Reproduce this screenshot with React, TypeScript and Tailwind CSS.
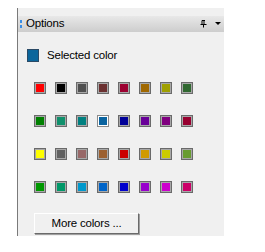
import React from 'react';

const rows: string[][] = [
  ['#ff0000', '#000000', '#505050', '#6b3030', '#9c0030', '#a06800', '#a0a000', '#306830'],
  ['#008000', '#10906c', '#008080', '#0a64a0', '#000098', '#680098', '#800080', '#980030'],
  ['#ffff00', '#606060', '#986868', '#9c6030', '#cc0000', '#d09a00', '#cccc00', '#689c30'],
  ['#009800', '#009868', '#0098cc', '#0064c8', '#0000cc', '#9800cc', '#cc00cc', '#cc0068'],
];

const Swatch = ({ color, selected }: { color: string; selected?: boolean }) => (
  <div
    className={
      selected
        ? 'w-[12px] h-[12px] border border-[#8a8a8a] bg-white p-px'
        : 'w-[12px] h-[12px] border border-[#6a6a6a] bg-[#a8a8a8] p-px'
    }
  >
    <div className="w-full h-full" style={{ backgroundColor: color }} />
  </div>
);

export default function App() {
  return (
    <div className="w-[265px] h-[252px] bg-white" style={{ fontFamily: '"Liberation Sans", Arial, sans-serif' }}>
      <div className="ml-[17px] pt-[8px]">
        <div className="w-[207px] h-[228px] bg-[#f0f0f0] border-l border-[#7a7a7a] flex flex-col">
          <div className="h-[8px]" />
          {/* header */}
          <div className="h-[16px] bg-gradient-to-b from-[#e8e8e8] to-[#cdcdcd] flex items-center pl-[2px] pr-[3px]">
            <div className="flex flex-col gap-[2px] mr-[4px]">
              <div className="w-[2px] h-[3px] bg-[#3a8ee6]" />
              <div className="w-[2px] h-[3px] bg-[#3a8ee6]" />
            </div>
            <span className="text-[11.5px] leading-none text-black tracking-[-0.2px]">Options</span>
            <div className="ml-auto flex items-center gap-[8px]">
              <svg width="7" height="8" viewBox="0 0 7 8">
                <path d="M2 0.5h3M2 0.5v4M4 0.5v4M0.5 4.5h6M3.5 4.5v3" stroke="#000" strokeWidth="1" fill="none" />
              </svg>
              <svg width="6" height="4" viewBox="0 0 6 4">
                <path d="M0 0h6L3 3z" fill="#000" />
              </svg>
            </div>
          </div>
          {/* selected color */}
          <div className="flex items-center mt-[17px] pl-[9px]">
            <div className="w-[12px] h-[13px] bg-[#0b669c] border border-[#2a4a66]" />
            <span className="ml-[8px] text-[11.5px] leading-none text-black tracking-[-0.2px]">Selected color</span>
          </div>
          {/* grid */}
          <div className="mt-[20px] pl-[16px] flex flex-col gap-[21px]">
            {rows.map((row, r) => (
              <div key={r} className="flex gap-[9px]">
                {row.map((c, i) => (
                  <Swatch key={i} color={c} selected={r === 1 && i === 3} />
                ))}
              </div>
            ))}
          </div>
          <div className="mt-[17px] pl-[16px]">
            <button className="w-[105px] h-[21px] bg-[#f0f0f0] border border-t-white border-l-white border-r-[#6a6a6a] border-b-[#6a6a6a] shadow-[1px_1px_0_#a0a0a0] text-[11.5px] leading-none text-black tracking-[-0.2px]">
              More colors ...
            </button>
          </div>
        </div>
      </div>
    </div>
  );
}
